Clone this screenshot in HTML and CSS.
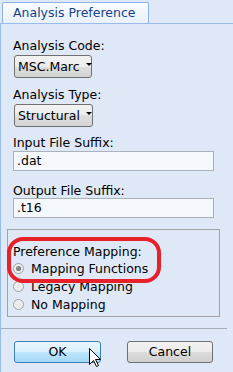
FILE: index.html
```html
<!DOCTYPE html>
<html>
<head>
<meta charset="utf-8">
<link rel="stylesheet" href="styles.css">
</head>
<body>
<div class="tabstrip"><div class="tab">Analysis Preference</div></div>
<div class="panel">
  <div class="label l1">Analysis Code:</div>
  <div class="select s1"><span>MSC.Marc</span><span class="caret"></span></div>
  <div class="label l2">Analysis Type:</div>
  <div class="select s2"><span>Structural</span><span class="caret"></span></div>
  <div class="label l3">Input File Suffix:</div>
  <div class="input i1">.dat</div>
  <div class="label l4">Output File Suffix:</div>
  <div class="input i2">.t16</div>
  <div class="fieldset">
    <div class="label">Preference Mapping:</div>
    <div class="radio"><span class="circle checked"></span>Mapping Functions</div>
    <div class="radio"><span class="circle"></span>Legacy Mapping</div>
    <div class="radio"><span class="circle"></span>No Mapping</div>
  </div>
  <div class="sep"></div>
  <div class="buttons">
    <div class="btn ok">OK</div>
    <div class="btn cancel">Cancel</div>
  </div>
  <div class="annot"></div>
  <svg class="cursor" width="13" height="20" viewBox="0 0 13 20"><path d="M0.5 0.5 L0.5 16.5 L4.5 12.5 L7.5 18.5 L9.5 17.5 L6.5 11.5 L11.5 11.5 Z" fill="#fff" stroke="#000" stroke-width="1" stroke-linejoin="miter"/></svg>
</div>
</body>
</html>
```

FILE: styles.css
```css
html, body {
  margin: 0;
  padding: 0;
  background: #dfe8f6;
  font-family: "DejaVu Sans", Verdana, sans-serif;
  font-size: 12.5px;
  color: #000;
  width: 233px;
  height: 372px;
  overflow: hidden;
}
.tabstrip {
  border-bottom: 1px solid #99bbe8;
  padding: 2px 0 0 2px;
  box-sizing: border-box;
  height: 24px;
}
.tab {
  width: 147px;
  height: 21px;
  box-sizing: border-box;
  border: 1px solid #8db2e3;
  border-bottom: none;
  border-radius: 2px 2px 0 0;
  background: linear-gradient(#fbfdff, #e8f0fa);
  color: #15428b;
  padding-left: 10px;
  line-height: 20px;
}
.panel {
  position: relative;
  border-left: 1px solid #99bbe8;
  padding-left: 12px;
  height: 348px;
  box-sizing: border-box;
}
.label {
  line-height: 15px;
  height: 15px;
  white-space: nowrap;
}
.l1 { padding-top: 14px; }
.l2 { margin-top: 9px; }
.l3 { margin-top: 8px; }
.l4 { margin-top: 12px; }
.select {
  display: flex;
  align-items: center;
  height: 23px;
  box-sizing: border-box;
  border: 1px solid #707070;
  border-radius: 3px;
  background: linear-gradient(#f3f3f3 0%, #ececec 50%, #dedede 50%, #d4d4d4 100%);
  padding: 0 5px 0 3px;
  margin-left: 1px;
  gap: 6px;
}
.s1 { width: 78px; margin-top: 2px; }
.s2 { width: 79px; margin-top: 2px; }
.caret {
  width: 0;
  height: 0;
  border-left: 3px solid transparent;
  border-right: 3px solid transparent;
  border-top: 3px solid #000;
  margin-top: -4px;
  margin-left: auto;
}
.input {
  width: 201px;
  height: 20px;
  box-sizing: border-box;
  border: 1px solid #a9b1bb;
  background: #f5f8fc;
  padding-left: 3px;
  line-height: 18px;
}
.i1 { margin-top: 1px; }
.i2 { margin-top: 0; }
.fieldset {
  margin-top: 11px;
  margin-left: -6px;
  width: 213px;
  box-sizing: border-box;
  border: 1px solid #a3a3a3;
  padding: 14px 0 3px 5px;
}
.radio {
  display: flex;
  align-items: center;
  height: 18px;
  gap: 7px;
  white-space: nowrap;
}
.circle {
  width: 11px;
  height: 11px;
  box-sizing: border-box;
  border-radius: 50%;
  border: 1px solid #a0a0a0;
  background: radial-gradient(circle at 50% 50%, #e8e8e8 0%, #f4f4f4 100%);
  display: flex;
  align-items: center;
  justify-content: center;
}
.circle.checked::after {
  content: "";
  width: 5px;
  height: 5px;
  border-radius: 50%;
  background: radial-gradient(circle at 40% 40%, #9a9a9a, #5a5a5a);
}
.sep {
  margin-top: 11px;
  margin-left: -12px;
  width: 226px;
  height: 1px;
  background: #a7adb6;
}
.buttons {
  display: flex;
  margin-top: 12px;
  margin-left: 1px;
  gap: 26px;
}
.btn {
  height: 22px;
  box-sizing: border-box;
  border-radius: 3px;
  text-align: center;
  line-height: 20px;
}
.ok {
  width: 87px;
  border: 1px solid #3c7fb1;
  background: linear-gradient(#e9f6fd 0%, #d9f0fc 50%, #bee6fd 50%, #a7d9f5 100%);
}
.cancel {
  width: 86px;
  border: 1px solid #707070;
  background: linear-gradient(#f2f2f2 0%, #ebebeb 50%, #dddddd 50%, #cfcfcf 100%);
}
.annot {
  position: absolute;
  left: 6px;
  top: 213px;
  width: 154px;
  height: 46px;
  box-sizing: border-box;
  border: 4px solid #e8202a;
  border-radius: 16px;
  pointer-events: none;
}
.cursor {
  position: absolute;
  left: 88px;
  top: 324px;
}
```
